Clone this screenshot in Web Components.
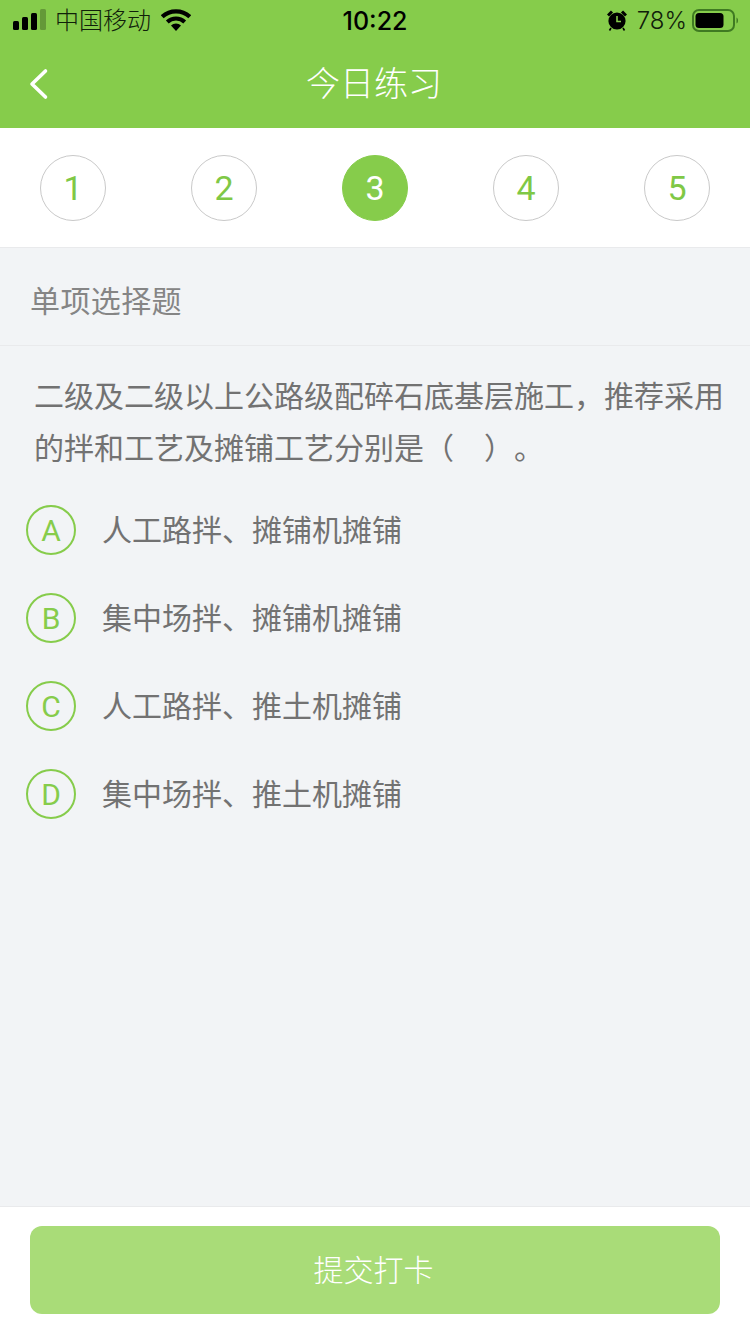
<!DOCTYPE html>
<html lang="zh-CN"><head><meta charset="utf-8">
<style>
html,body{margin:0;padding:0;height:1334px;overflow:hidden;background:#f2f4f6}
body{font-family:"Noto Sans CJK SC","Liberation Sans",sans-serif;display:flex;flex-direction:column}
</style></head><body>
<app-header title-text="今日练习"></app-header>
<step-bar current="3" count="5"></step-bar>
<section-label>单项选择题</section-label>
<question-text>二级及二级以上公路级配碎石底基层施工，推荐采用的拌和工艺及摊铺工艺分别是（　）。</question-text>
<option-list>
<option-row letter="A">人工路拌、摊铺机摊铺</option-row>
<option-row letter="B">集中场拌、摊铺机摊铺</option-row>
<option-row letter="C">人工路拌、推土机摊铺</option-row>
<option-row letter="D">集中场拌、推土机摊铺</option-row>
</option-list>
<submit-bar>提交打卡</submit-bar>
<script>
const def=(name,html,init)=>customElements.define(name,class extends HTMLElement{
  constructor(){super();this.attachShadow({mode:'open'}).innerHTML=html}
  connectedCallback(){init&&init(this)}
});
def('app-header',`<style>
:host{display:block;background:#86cc4b;height:128px;flex:none;box-sizing:border-box}
.st{height:40px;display:flex;align-items:center;justify-content:space-between;color:#0a1405;position:relative;padding:0 12px 0 13px}
.l,.r{display:flex;align-items:center}
.l{font:24px/40px "Noto Sans CJK SC",sans-serif}
.car{margin-left:8px;color:#10200a;font-size:24px;font-weight:300;line-height:38px;height:40px}
.wifi{margin-left:10px}
.time{position:absolute;left:0;right:0;text-align:center;font:500 25px/40px Inter,"Liberation Sans",sans-serif;color:#000;padding-top:1px;box-sizing:border-box}
.r{font:300 24px/40px Inter,"Liberation Sans",sans-serif;color:#10200a}
.pc{margin:0 5px 0 10px;position:relative;top:1px}
.nav{height:88px;display:flex;align-items:center;justify-content:center;position:relative;color:#fff;font:300 34px/88px "Noto Sans CJK SC",sans-serif}
.nav span{position:relative;top:-2px;left:-1px}
.back{position:absolute;left:28px;top:26px}
</style>
<div class="st"><div class="l">
<svg width="34" height="21" viewBox="0 0 34 21" style="margin-top:-1px"><rect x="0" y="12" width="6" height="9" rx="1.5" fill="#000"/><rect x="9" y="8" width="6" height="13" rx="1.5" fill="#000"/><rect x="18" y="4" width="6" height="17" rx="1.5" fill="#000"/><rect x="27" y="0" width="6" height="21" rx="1.5" fill="#000" opacity=".25"/></svg>
<span class="car">中国移动</span>
<svg class="wifi" width="30" height="22" viewBox="0 0 30 22" style="margin-top:-1px"><path d="M1.2 7.8A20 20 0 0 1 28.8 7.8" fill="none" stroke="#000" stroke-width="4.2"/><path d="M6.3 13A12.5 12.5 0 0 1 23.7 13" fill="none" stroke="#000" stroke-width="4"/><path d="M10 16.6A7 7 0 0 1 20 16.6L15 22Z" fill="#000"/></svg>
</div>
<div class="time">10:22</div>
<div class="r">
<svg width="20" height="21" viewBox="0 0 20 21"><circle cx="10" cy="11" r="8.6" fill="#000"/><path d="M10 6V11.5H14" fill="none" stroke="#86cc4b" stroke-width="1.6"/><path d="M1 5.5L5 1.5M19 5.5L15 1.5" stroke="#000" stroke-width="3"/><path d="M4 18L2.5 20.5M16 18L17.5 20.5" stroke="#000" stroke-width="1.6"/></svg>
<span class="pc">78%</span>
<svg width="46" height="23" viewBox="0 0 46 23"><rect x="1" y="1" width="41" height="21" rx="6" fill="none" stroke="#3f7a22" stroke-width="2"/><rect x="3.5" y="4" width="28" height="15" rx="3.5" fill="#000"/><path d="M44.5 8.5C45.5 9 46 10 46 11.5S45.5 14 44.5 14.5Z" fill="#3f7a22"/></svg>
</div></div>
<div class="nav">
<svg class="back" width="22" height="36" viewBox="0 0 22 36"><path d="M17.5 5L4 18L17.5 31" fill="none" stroke="#fff" stroke-width="3.6" stroke-linecap="round" stroke-linejoin="round"/></svg>
<span id="t"></span></div>`,el=>{el.shadowRoot.getElementById('t').textContent=el.getAttribute('title-text')});
def('step-bar',`<style>
:host{display:flex;flex:none;justify-content:space-between;align-items:center;box-sizing:border-box;height:120px;background:#fff;border-bottom:1px solid #e9eaec;padding:1px 40px 0}
.c{width:66px;height:66px;box-sizing:border-box;border-radius:50%;border:1px solid #c9c9c9;display:flex;align-items:center;justify-content:center;color:#7fc846;font:400 34px/1 Roboto,"Liberation Sans",sans-serif}
.c.on{background:#86cc4b;border-color:#86cc4b;color:#fff}
</style><div id="w" style="display:contents"></div>`,el=>{
  const w=el.shadowRoot.getElementById('w'),n=+el.getAttribute('count'),cur=+el.getAttribute('current');
  for(let i=1;i<=n;i++){const d=document.createElement('div');d.className='c'+(i===cur?' on':'');d.textContent=i;w.append(d)}
});
def('section-label',`<style>
:host{display:block;flex:none;box-sizing:border-box;height:98px;padding:0 30px;border-bottom:1px solid #e9eaec;color:#858585;letter-spacing:.4px;font:400 30px/103px "Noto Sans CJK SC",sans-serif}
</style><slot></slot>`);
def('question-text',`<style>
:host{display:block;flex:none;box-sizing:border-box;height:130px;padding:22px 25px 0 34px;color:#727272;font:400 30px/52px "Noto Sans CJK SC",sans-serif;text-spacing-trim:space-all}
</style><slot></slot>`);
def('option-list',`<style>
:host{display:flex;flex:none;flex-direction:column;gap:38px;padding:29px 0 0 26px}
</style><slot></slot>`);
def('option-row',`<style>
:host{display:flex;align-items:center;gap:26px;height:50px;color:#727272;font:400 30px/50px "Noto Sans CJK SC",sans-serif}
.b{width:50px;height:50px;flex:none;box-sizing:border-box;border-radius:50%;border:2px solid #86cc4b;display:flex;align-items:center;justify-content:center;color:#86cc4b;font:400 30px/1 Roboto,"Liberation Sans",sans-serif;padding-top:1px}
span{position:relative;top:-2px}
</style><div class="b" id="b"></div><span><slot></slot></span>`,el=>{el.shadowRoot.getElementById('b').textContent=el.getAttribute('letter')});
def('submit-bar',`<style>
:host{display:block;margin-top:auto;flex:none;box-sizing:border-box;height:128px;background:#fff;border-top:1px solid #e9eaec;padding:19px 30px 0}
.btn{height:88px;box-sizing:border-box;padding:0 3px 4px 0;border-radius:12px;background:#a9dc78;color:#fff;display:flex;align-items:center;justify-content:center;font:300 30px/84px "Noto Sans CJK SC",sans-serif}
</style><div class="btn"><slot></slot></div>`);
</script>
</body></html>
